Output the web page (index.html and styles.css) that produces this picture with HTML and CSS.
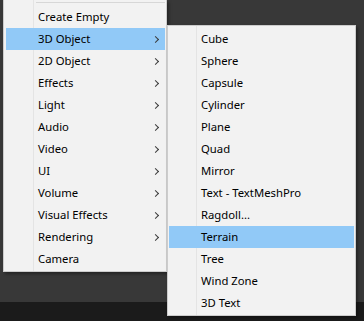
FILE: index.html
```html
<!DOCTYPE html>
<html lang="en">
<head>
  <meta charset="UTF-8" />
  <title>GameObject menu</title>
  <link rel="stylesheet" href="styles.css">
</head>
<body>
  <div class="sahne">
    <ul class="menu ana">
      <li class="ayrac"></li>
      <li class="satir">Create Empty</li>
      <li class="satir alt secili">3D Object</li>
      <li class="satir alt">2D Object</li>
      <li class="satir alt">Effects</li>
      <li class="satir alt">Light</li>
      <li class="satir alt">Audio</li>
      <li class="satir alt">Video</li>
      <li class="satir alt">UI</li>
      <li class="satir alt">Volume</li>
      <li class="satir alt">Visual Effects</li>
      <li class="satir alt">Rendering</li>
      <li class="satir">Camera</li>
    </ul>

    <ul class="menu yan">
      <li class="satir">Cube</li>
      <li class="satir">Sphere</li>
      <li class="satir">Capsule</li>
      <li class="satir">Cylinder</li>
      <li class="satir">Plane</li>
      <li class="satir">Quad</li>
      <li class="satir">Mirror</li>
      <li class="satir">Text - TextMeshPro</li>
      <li class="satir">Ragdoll...</li>
      <li class="satir secili">Terrain</li>
      <li class="satir">Tree</li>
      <li class="satir">Wind Zone</li>
      <li class="satir">3D Text</li>
    </ul>
  </div>
</body>
</html>
```

FILE: styles.css
```css
* {
  margin: 0;
  padding: 0;
  box-sizing: border-box;
}

body {
  font-family: "Noto Sans", "Open Sans", sans-serif;
  font-size: 11.3px;
  color: #000;
  height: 321px;
  overflow: hidden;
  /* Editor paneli ve alttaki koyu şerit */
  background: linear-gradient(#383838 302px, #1b1b1b 302px);
}

.sahne {
  display: flex;
  align-items: flex-start;
  padding-left: 3px;
}

.menu {
  list-style: none;
  background-color: #f2f2f2;
  border: 1px solid #cccccc;
  box-shadow: 2px 2px 3px rgba(0, 0, 0, 0.35);
}

/* Sol menü: üst kısmı ekranın dışında */
.ana {
  width: 164px;
  border-top: none;
  padding: 0 1px 1px 2px;
  background-image: linear-gradient(90deg, transparent 29px, #e4e4e4 29px, #e4e4e4 30px, transparent 30px);
}

.yan {
  width: 189px;
  margin-top: 25px;
  padding: 2px 1px 1px 1px;
  background-image: linear-gradient(90deg, transparent 28px, #e4e4e4 28px, #e4e4e4 29px, transparent 29px);
}

.ayrac {
  height: 1px;
  margin: 2px 0 3px 30px;
  background: #d7d7d7;
}

.satir {
  height: 22px;
  line-height: 22px;
  padding-left: 32px;
  position: relative;
  white-space: nowrap;
}

.satir.secili {
  background: #91c9f7;
}

/* Alt menü oku */
.satir.alt::after {
  content: "";
  position: absolute;
  right: 7px;
  top: 9px;
  width: 4px;
  height: 4px;
  border-top: 1px solid #3a3a3a;
  border-right: 1px solid #3a3a3a;
  transform: rotate(45deg);
}
```
